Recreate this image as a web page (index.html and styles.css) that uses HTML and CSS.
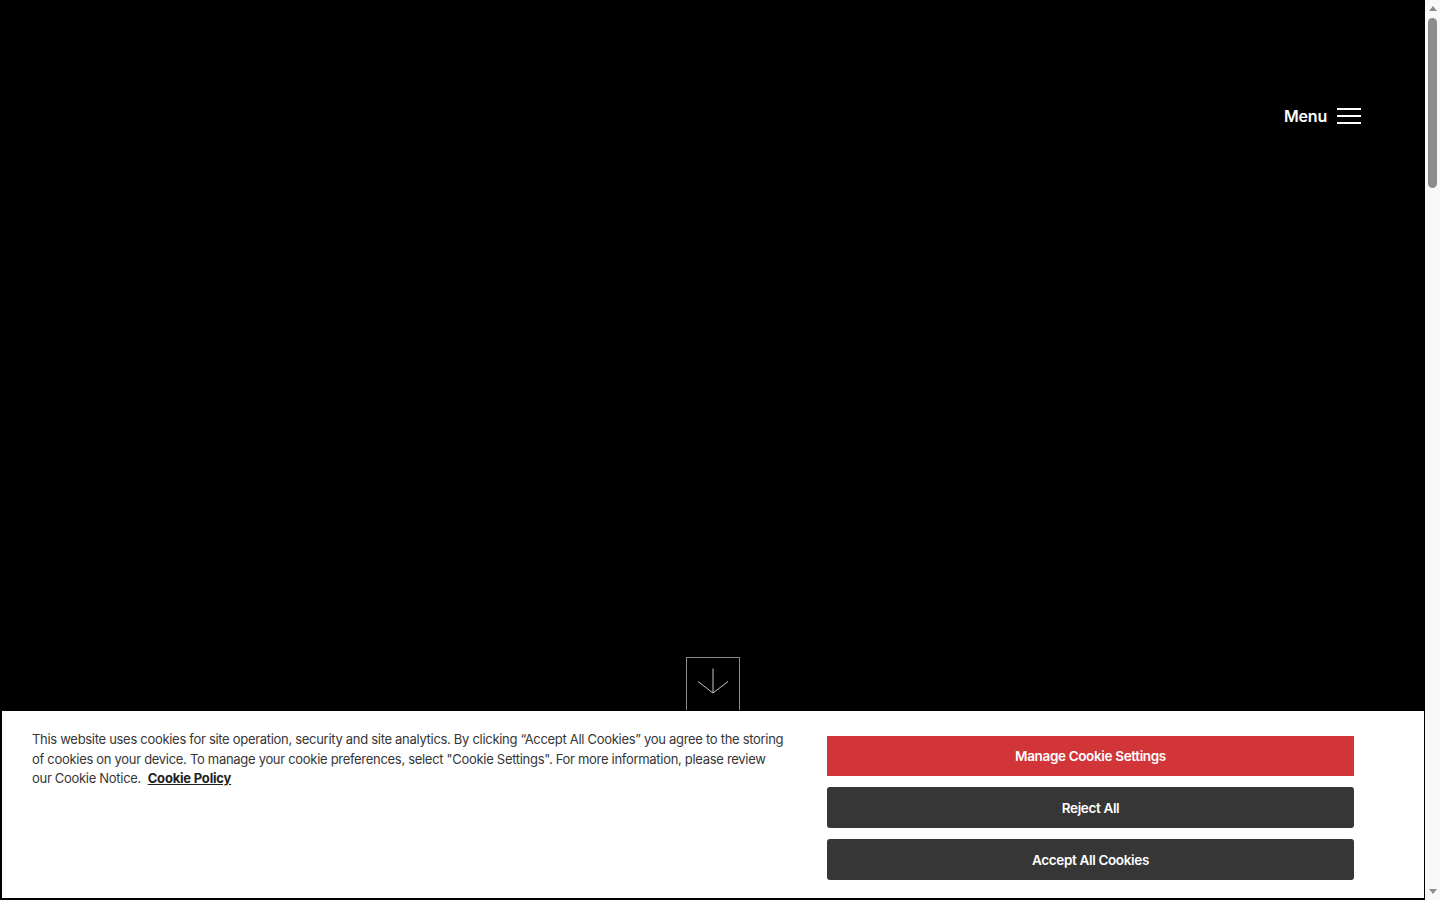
FILE: index.html
```html
<!DOCTYPE html>
<html lang="en">
<head>
<meta charset="utf-8">
<title>Home</title>
<link rel="stylesheet" href="styles.css">
</head>
<body>
<div class="page">
  <main class="main">
    <section class="hero">
      <header class="topbar">
        <button class="menu-btn" type="button">
          <span class="menu-label">Menu</span>
          <svg class="menu-icon" width="24" height="16" viewBox="0 0 24 16" aria-hidden="true">
            <path d="M0 1h24M0 8h24M0 15h24" stroke="#fff" stroke-width="2" fill="none"/>
          </svg>
        </button>
      </header>
      <div class="hero-spacer"></div>
      <div class="scroll-down">
        <svg width="32" height="26" viewBox="0 0 32 26" aria-hidden="true">
          <path d="M16 0.5v24.5M1 13.5l15 11.5 15-11.5" stroke="#c4c4c4" stroke-width="1" fill="none"/>
        </svg>
      </div>
    </section>
  </main>
  <div class="rail" aria-hidden="true">
    <span class="rail-up"></span>
    <span class="rail-thumb"></span>
    <span class="rail-fill"></span>
    <span class="rail-down"></span>
  </div>
</div>

<div class="cookie-banner">
  <p class="cookie-text">This website uses cookies for site operation, security and site analytics. By clicking “Accept All Cookies” you agree to the storing of cookies on your device. To manage your cookie preferences, select "Cookie Settings". For more information, please review our Cookie Notice.&nbsp; <a href="#" class="cookie-link">Cookie Policy</a></p>
  <div class="cookie-actions">
    <button class="btn btn-red" type="button">Manage Cookie Settings</button>
    <button class="btn btn-dark" type="button">Reject All</button>
    <button class="btn btn-dark" type="button">Accept All Cookies</button>
  </div>
</div>
</body>
</html>
```
FILE: styles.css
```css
*, *::before, *::after {
  box-sizing: border-box;
}
html, body {
  margin: 0;
  padding: 0;
  height: 900px;
  overflow: hidden;
  background: #000;
}
body {
  font-family: Inter, "Liberation Sans", Arial, sans-serif;
}
.page {
  display: grid;
  grid-template-columns: 1fr 15px;
  height: 900px;
}
.main {
  background: #000;
  min-width: 0;
}
.hero {
  height: 720px;
  display: flex;
  flex-direction: column;
  align-items: center;
}
.topbar {
  align-self: stretch;
  display: flex;
  justify-content: flex-end;
  padding: 104px 64px 0 0;
}
.menu-btn {
  display: flex;
  align-items: center;
  gap: 10px;
  background: none;
  border: 0;
  padding: 0;
  color: #fff;
  cursor: pointer;
  font-family: inherit;
}
.menu-label {
  font-size: 16px;
  font-weight: 600;
  line-height: 24px;
  letter-spacing: -0.2px;
}
.menu-icon {
  display: block;
}
.hero-spacer {
  flex: 1;
}
.scroll-down {
  width: 54px;
  height: 54px;
  border: 1px solid #8a8a8a;
  display: flex;
  justify-content: center;
  align-items: flex-start;
  padding-top: 10px;
  margin-bottom: 9px;
}
.scroll-down svg {
  display: block;
}
/* scrollbar rail */
.rail {
  background: #f8f8f8;
  display: flex;
  flex-direction: column;
  align-items: center;
  padding: 4px 0;
}
.rail-up,
.rail-down {
  width: 0;
  height: 0;
  border-left: 4.5px solid transparent;
  border-right: 4.5px solid transparent;
}
.rail-up {
  border-bottom: 5px solid #8b8b8b;
  margin-top: 2px;
}
.rail-down {
  border-top: 5px solid #8b8b8b;
  margin-bottom: 2px;
}
.rail-thumb {
  width: 9px;
  height: 170px;
  margin-top: 7px;
  border-radius: 5px;
  background: #8d8d8d;
}
.rail-fill {
  flex: 1;
}
/* cookie banner */
.cookie-banner {
  position: fixed;
  left: 0;
  right: 15px;
  bottom: 1px;
  height: 189px;
  background: #fff;
  border: 1px solid #000;
  border-left-width: 2px;
  display: flex;
  justify-content: space-between;
  align-items: flex-start;
  padding: 19px 70px 0 30px;
}
.cookie-text {
  margin: 0;
  width: 755px;
  font-size: 13px;
  line-height: 19.5px;
  color: #363636;
  letter-spacing: -0.3px;
}
.cookie-link {
  color: #222;
  font-weight: 700;
  letter-spacing: -0.2px;
  text-decoration: underline;
}
.cookie-actions {
  width: 527px;
  display: flex;
  flex-direction: column;
  gap: 11px;
  padding-top: 6px;
}
.btn {
  height: 40px;
  border: 0;
  font-family: inherit;
  font-size: 13.5px;
  font-weight: 600;
  letter-spacing: -0.35px;
  color: #fff;
  cursor: pointer;
}
.btn-red {
  background: #d23538;
}
.btn-dark {
  background: #363636;
  border-radius: 3px;
  height: 41px;
}
```
